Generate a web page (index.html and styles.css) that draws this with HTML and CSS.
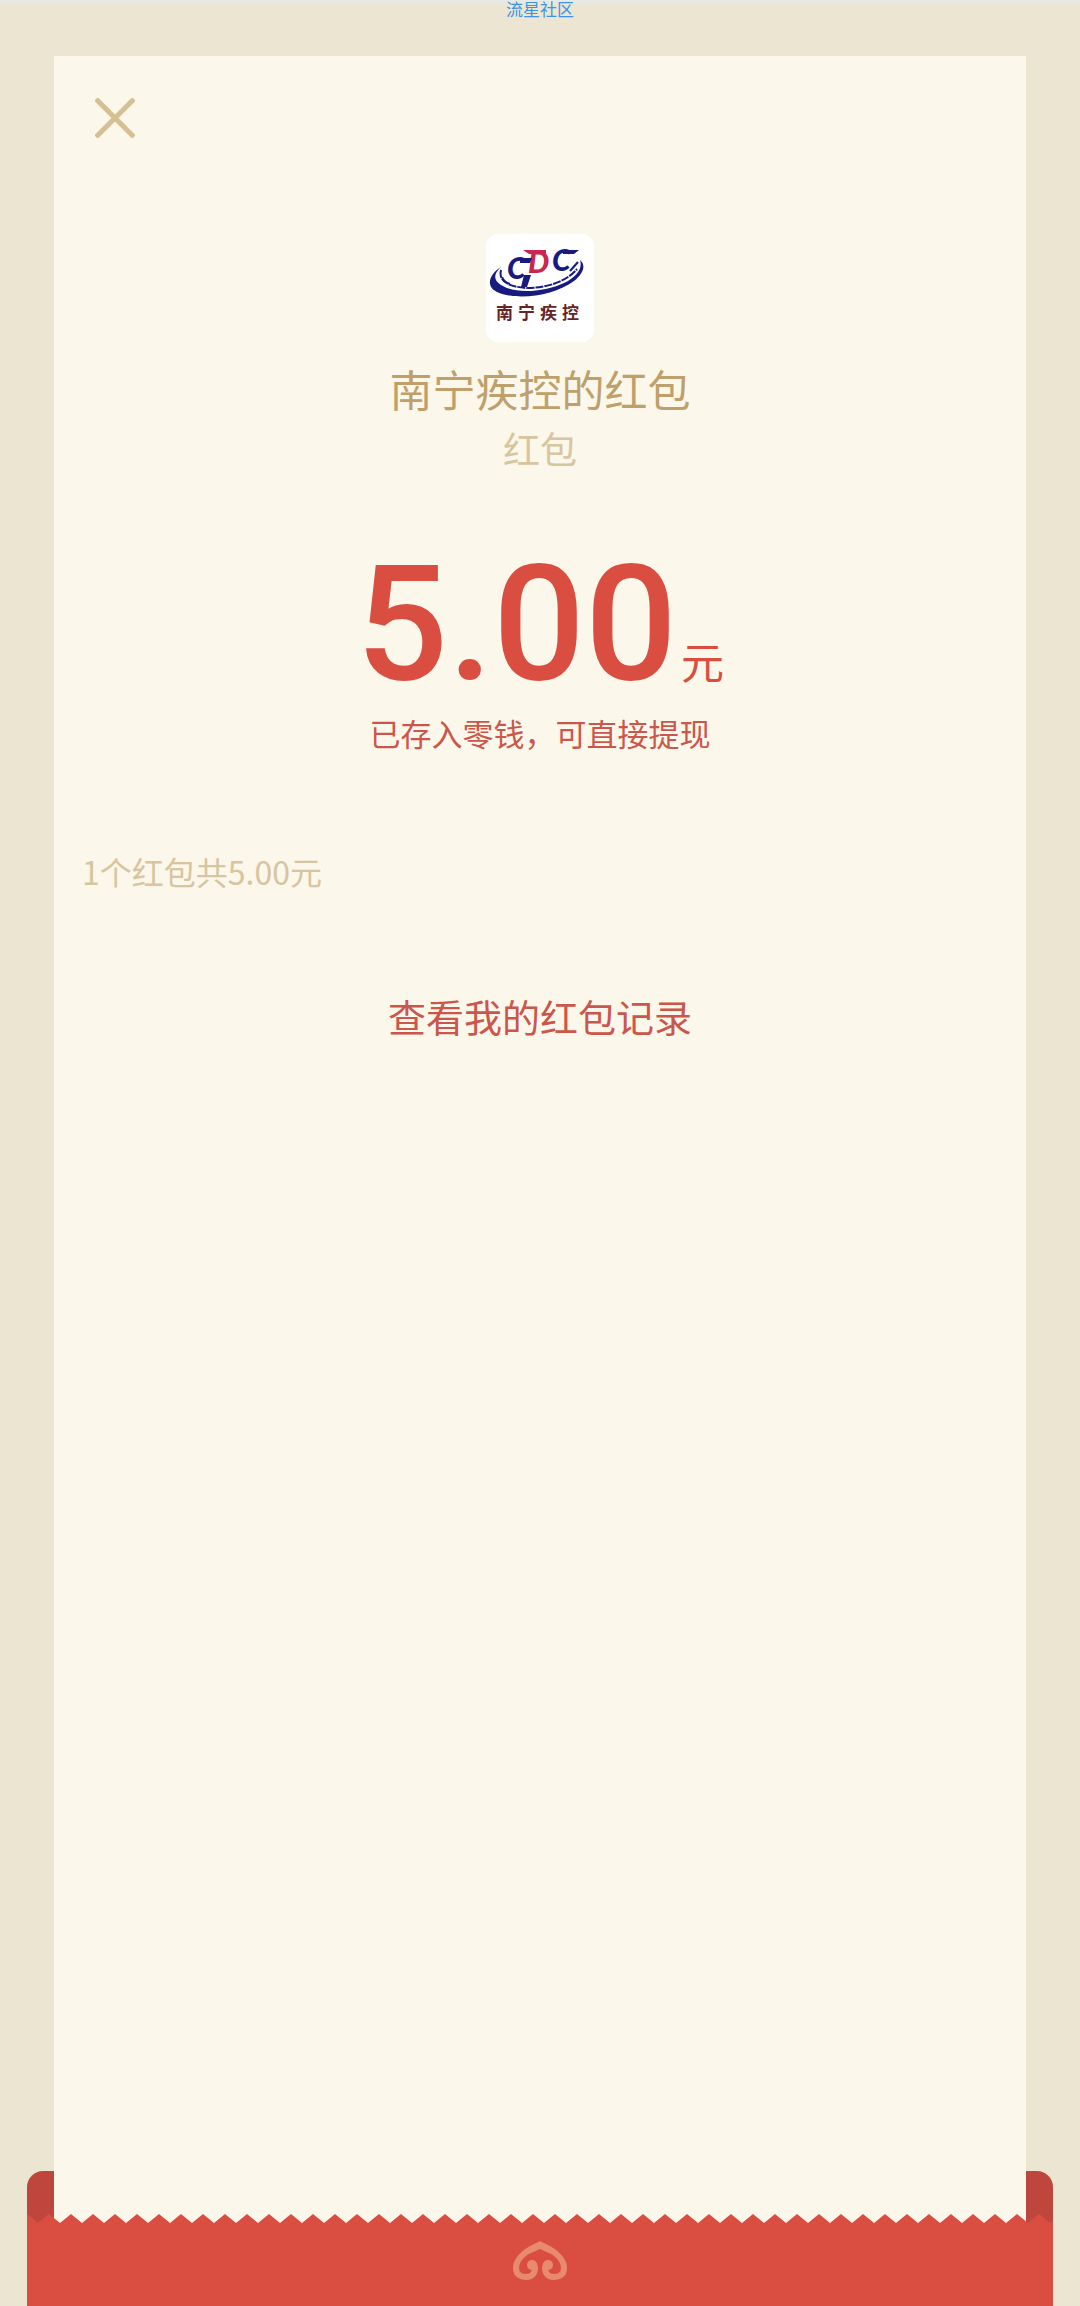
FILE: index.html
```
<!DOCTYPE html>
<html lang="zh-CN">
<head>
  <meta charset="UTF-8" />
  <meta name="viewport" content="width=device-width, initial-scale=1" />
  <title>南宁疾控的红包</title>
  <link rel="stylesheet" href="styles.css">
</head>
<body>
<header class="top">流星社区</header>

<main class="card">
  <button class="close" type="button" aria-label="关闭">
    <svg viewBox="0 0 40 40" width="40" height="40"><path d="M1 1L39 39M39 1L1 39" stroke="#d5bf93" stroke-width="5" /></svg>
  </button>

  <div class="avatar">
    <svg viewBox="0 0 108 108" width="108" height="108">
      <!-- rings -->
      <path d="M15 33C2 41 0 53 11 58C31 67 68 62 88 47C98 39 100 31 94 26C97 35 90 43 78 49C59 58 30 60 17 52C7 47 7 40 15 33Z" fill="#171b80" />
      <path d="M15 36C12 48 24 53 41 54C62 54 81 47 91 35" fill="none" stroke="#171b80" stroke-width="2" stroke-dasharray="8 1" />
      <path d="M16 43Q18 48 24 50M84 37L92 28" fill="none" stroke="#171b80" stroke-width="2" />
      <path d="M38 41L45 41L41 53L35 53Z" fill="#171b80" />
      <g class="logo-letters">
        <text x="21" y="45" fill="#171b80">C</text>
        <text x="42" y="39" fill="#c92650">D</text>
        <text x="66" y="37" fill="#171b80">C</text>
      </g>
      <path d="M37 16H60V20H43Z" fill="#c92650" />
      <path d="M34 24H46L44 29H34ZM77 16H93L88 20H77Z" fill="#171b80" />
      <text class="logo-name" x="10" y="85">南</text>
      <text class="logo-name" x="32" y="85">宁</text>
      <text class="logo-name" x="54" y="85">疾</text>
      <text class="logo-name" x="76" y="85">控</text>
    </svg>
  </div>

  <h1>南宁疾控的红包</h1>
  <p class="wish">红包</p>
  <p class="amount">5.00<span class="unit">元</span></p>
  <p class="deposit">已存入零钱，可直接提现</p>
  <p class="count">1个红包共5.00元</p>
  <a class="records" href="#">查看我的红包记录</a>
</main>

<footer class="envelope">
  <div class="flap"><div class="paper"></div></div>
  <svg class="zigzag" width="100%" height="9" aria-hidden="true">
    <defs>
      <pattern id="teeth" width="22" height="9" patternUnits="userSpaceOnUse">
        <path d="M0 0L11 9L22 0V9H0Z" fill="#da4e42" />
      </pattern>
    </defs>
    <rect width="100%" height="9" fill="url(#teeth)" />
  </svg>
  <div class="pocket">
    <svg viewBox="0 0 54 39" width="54" height="39" aria-hidden="true">
      <g fill="none" stroke="#e88a70" stroke-width="6" stroke-linecap="round">
        <path d="M27 4C17 7 3 16 3 27C3 34 8 36 13 36C19 36 22 32 22 27C22 23 20 22 18 23" />
        <path d="M27 4C37 7 51 16 51 27C51 34 46 36 41 36C35 36 32 32 32 27C32 23 34 22 36 23" />
      </g>
      <path d="M12 9L27 0L42 9L38 13L27 8L16 13Z" fill="#e88a70" />
      <circle cx="19" cy="24" r="5" fill="#e88a70" />
      <circle cx="35" cy="24" r="5" fill="#e88a70" />
    </svg>
  </div>
</footer>
</body>
</html>
```
FILE: styles.css
```
* {
  box-sizing: border-box;
}

body {
  display: flex;
  flex-direction: column;
  min-height: 100vh;
  margin: 0;
  background: #ece5d1;
  font-family: "Noto Sans CJK SC", sans-serif;
}

h1, p {
  margin: 0;
  font-weight: normal;
}

.top {
  height: 56px;
  background: linear-gradient(#e6ebe6, #ece5d1 6px);
  color: #3d94e6;
  font-size: 17px;
  line-height: 17px;
  text-align: center;
}

.card {
  flex: 1;
  display: flex;
  flex-direction: column;
  align-items: center;
  margin: 0 54px;
  padding: 42px 28px 0;
  background: #fbf7ea;
}

.close {
  align-self: flex-start;
  margin-left: 13px;
  padding: 0;
  border: none;
  background: none;
  cursor: pointer;
}

.close svg,
.avatar svg,
.pocket svg {
  display: block;
}

.avatar {
  margin-top: 96px;
  border-radius: 12px;
  background: #fff;
}

.logo-letters {
  font-family: Lato, sans-serif;
  font-size: 30px;
  font-style: italic;
  font-weight: 900;
}

.logo-name {
  fill: #662422;
  font-size: 17px;
  font-weight: bold;
}

h1 {
  margin-top: 16px;
  color: #bfa06b;
  font-size: 43px;
  line-height: 60px;
}

.wish {
  margin-top: 4px;
  color: #d7c5a0;
  font-size: 37px;
  line-height: 52px;
}

.amount {
  margin-top: 88px;
  color: #da4e42;
  font-family: Roboto, "Noto Sans CJK SC", sans-serif;
  font-size: 162px;
  font-weight: 500;
  line-height: 124px;
}

.unit {
  margin-left: 4px;
  font-size: 43px;
  font-weight: normal;
  line-height: 43px;
}

.deposit {
  margin-top: 27px;
  color: #cb564b;
  font-size: 31px;
  line-height: 40px;
}

.count {
  align-self: flex-start;
  margin-top: 98px;
  color: #d7c5a0;
  font-size: 32px;
  line-height: 40px;
}

.records {
  margin-top: 101px;
  color: #cb564b;
  font-size: 38px;
  line-height: 48px;
  text-decoration: none;
}

.envelope {
  margin: 0 27px;
}

.flap {
  height: 52px;
  padding: 0 27px;
  border-radius: 16px 16px 0 0;
  background: #be463c;
}

.paper {
  height: 100%;
  background: #fbf7ea;
}

.zigzag {
  display: block;
  margin-top: -9px;
}

.pocket {
  display: flex;
  justify-content: center;
  padding: 18px 0 26px;
  background: #da4e42;
}
```
